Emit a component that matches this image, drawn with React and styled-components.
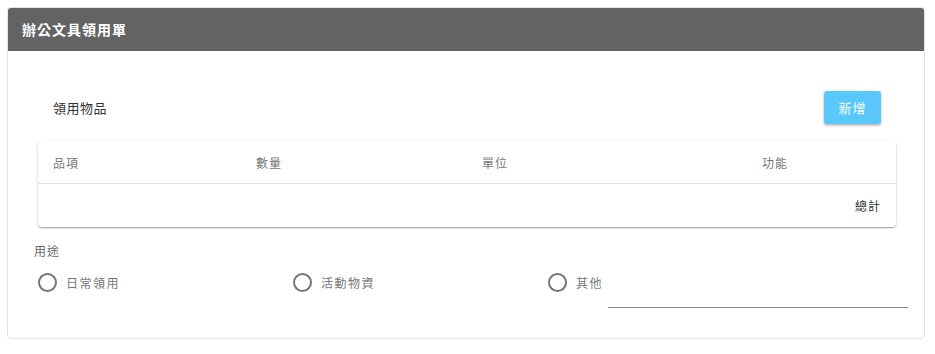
import React, { useState } from "react";
import styled, { createGlobalStyle } from "styled-components";

const GlobalStyle = createGlobalStyle`
  body {
    margin: 0;
    background: #fff;
    font-family: "Noto Sans CJK TC", "Noto Sans", sans-serif;
  }
`;

const Page = styled.div`
  padding: 7px 10px 0 7px;
`;

const Card = styled.div`
  border: 1px solid #e2e2e2;
  border-radius: 4px;
  background: #fff;
  overflow: hidden;
`;

const CardHeader = styled.div`
  height: 44px;
  margin: -1px -1px 0;
  padding-left: 15px;
  display: flex;
  align-items: center;
  background: #636363;
  color: #fff;
  font-size: 14px;
  font-weight: 700;
  letter-spacing: 1px;
`;

const CardBody = styled.div`
  padding: 40px 28px 30px 26px;
`;

const ItemsSection = styled.div`
  padding-left: 4px;
`;

const SectionBar = styled.div`
  height: 33px;
  display: flex;
  align-items: center;
  justify-content: space-between;
  padding: 0 15px;
`;

const SectionTitle = styled.span`
  font-size: 13px;
  color: #333;
  letter-spacing: 0.5px;
`;

const AddButton = styled.button`
  height: 33px;
  width: 57px;
  border: none;
  border-radius: 3px;
  background: #5bc8fb;
  color: #fff;
  font-family: inherit;
  font-size: 13px;
  letter-spacing: 1px;
  box-shadow: 0 1px 3px rgba(0, 0, 0, 0.25), 0 2px 2px rgba(0, 0, 0, 0.1);
  cursor: pointer;
`;

const Table = styled.div`
  margin-top: 17px;
  border-radius: 4px;
  background: #fff;
  box-shadow: 0 1px 3px rgba(0, 0, 0, 0.2), 0 1px 1px rgba(0, 0, 0, 0.14),
    0 2px 1px -1px rgba(0, 0, 0, 0.12);
`;

const HeadRow = styled.div`
  display: grid;
  grid-template-columns: 203px 226px 280px 1fr;
  height: 42px;
  align-items: center;
  border-bottom: 1px solid #e0e0e0;
`;

const HeadCell = styled.div`
  padding-left: 15px;
  font-size: 12px;
  color: #777;
  letter-spacing: 1px;
`;

const TotalRow = styled.div`
  height: 43px;
  display: flex;
  align-items: center;
  justify-content: flex-end;
  padding-right: 15px;
  font-size: 12px;
  color: #333;
  letter-spacing: 1px;
`;

const PurposeLabel = styled.div`
  margin-top: 16px;
  font-size: 12px;
  color: #666;
  letter-spacing: 1px;
  line-height: 16px;
`;

const RadioGroup = styled.div`
  margin-top: 13px;
  display: flex;
  align-items: flex-start;
`;

const Option = styled.label`
  flex: 0 0 ${({ $width }) => $width || "255px"};
  display: flex;
  align-items: flex-start;
  white-space: nowrap;
  cursor: pointer;
`;

const RadioLine = styled.span`
  height: 20px;
  display: flex;
  align-items: center;
  flex-shrink: 0;
`;

const Circle = styled.span`
  box-sizing: border-box;
  width: 19px;
  height: 19px;
  margin-left: 4px;
  border: 2px solid ${({ $checked }) => ($checked ? "#5bc8fb" : "#757575")};
  border-radius: 50%;
  display: flex;
  align-items: center;
  justify-content: center;

  &::after {
    content: "";
    width: 9px;
    height: 9px;
    border-radius: 50%;
    background: ${({ $checked }) => ($checked ? "#5bc8fb" : "transparent")};
  }
`;

const OptionText = styled.span`
  margin-left: 9px;
  font-size: 12px;
  color: #777;
  letter-spacing: 1.5px;
`;

const OtherInput = styled.input`
  box-sizing: border-box;
  flex-shrink: 0;
  width: 300px;
  height: 36px;
  margin-left: 5px;
  border: none;
  border-bottom: 1px solid #8a8a8a;
  outline: none;
  font-family: inherit;
  font-size: 12px;
  background: transparent;
`;

const columns = ["品項", "數量", "單位", "功能"];
const purposes = ["日常領用", "活動物資"];

export default function App() {
  const [purpose, setPurpose] = useState(null);

  return (
    <Page>
      <GlobalStyle />
      <Card>
        <CardHeader>辦公文具領用單</CardHeader>
        <CardBody>
          <ItemsSection>
            <SectionBar>
              <SectionTitle>領用物品</SectionTitle>
              <AddButton>新增</AddButton>
            </SectionBar>
            <Table>
              <HeadRow>
                {columns.map((c) => (
                  <HeadCell key={c}>{c}</HeadCell>
                ))}
              </HeadRow>
              <TotalRow>總計</TotalRow>
            </Table>
          </ItemsSection>

          <PurposeLabel>用途</PurposeLabel>
          <RadioGroup>
            {purposes.map((p) => (
              <Option key={p} onClick={() => setPurpose(p)}>
                <RadioLine>
                  <Circle $checked={purpose === p} />
                  <OptionText>{p}</OptionText>
                </RadioLine>
              </Option>
            ))}
            <Option $width="auto" onClick={() => setPurpose("其他")}>
              <RadioLine>
                <Circle $checked={purpose === "其他"} />
                <OptionText>其他</OptionText>
              </RadioLine>
              <OtherInput />
            </Option>
          </RadioGroup>
        </CardBody>
      </Card>
    </Page>
  );
}
